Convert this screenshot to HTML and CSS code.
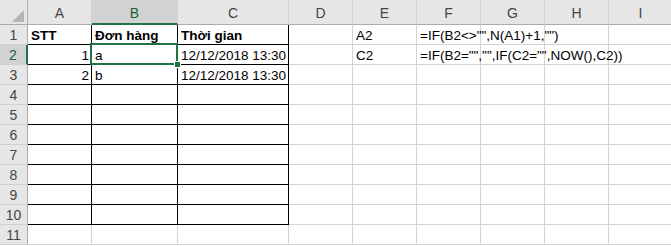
FILE: index.html
```html
<!DOCTYPE html>
<html lang="vi">
<head>
    <meta charset="UTF-8">
    <meta name="viewport" content="width=device-width, initial-scale=1.0">
    <title>Sheet1</title>
    <link rel="stylesheet" href="styles.css">
</head>
<body>
    <div class="sheet">
        <!-- header row -->
        <div class="corner"><span class="corner-tri"></span></div>
        <div class="hd">A</div>
        <div class="hd sel-col">B</div>
        <div class="hd">C</div>
        <div class="hd">D</div>
        <div class="hd">E</div>
        <div class="hd">F</div>
        <div class="hd">G</div>
        <div class="hd">H</div>
        <div class="hd">I</div>

        <!-- row 1 -->
        <div class="rh">1</div>
        <div class="c b bold">STT</div>
        <div class="c b bold">Đơn hàng</div>
        <div class="c b bold">Thời gian</div>
        <div class="c"></div>
        <div class="c">A2</div>
        <div class="c over">=IF(B2&lt;&gt;"",N(A1)+1,"")</div>
        <div class="c"></div>
        <div class="c"></div>
        <div class="c"></div>

        <!-- row 2 -->
        <div class="rh sel-row">2</div>
        <div class="c b num">1</div>
        <div class="c b">a</div>
        <div class="c b num">12/12/2018 13:30</div>
        <div class="c"></div>
        <div class="c">C2</div>
        <div class="c over">=IF(B2="","",IF(C2="",NOW(),C2))</div>
        <div class="c"></div>
        <div class="c"></div>
        <div class="c"></div>

        <!-- row 3 -->
        <div class="rh">3</div>
        <div class="c b num">2</div>
        <div class="c b">b</div>
        <div class="c b num">12/12/2018 13:30</div>
        <div class="c"></div><div class="c"></div><div class="c"></div><div class="c"></div><div class="c"></div><div class="c"></div>

        <div class="rh">4</div>
        <div class="c b"></div><div class="c b"></div><div class="c b"></div>
        <div class="c"></div><div class="c"></div><div class="c"></div><div class="c"></div><div class="c"></div><div class="c"></div>

        <div class="rh">5</div>
        <div class="c b"></div><div class="c b"></div><div class="c b"></div>
        <div class="c"></div><div class="c"></div><div class="c"></div><div class="c"></div><div class="c"></div><div class="c"></div>

        <div class="rh">6</div>
        <div class="c b"></div><div class="c b"></div><div class="c b"></div>
        <div class="c"></div><div class="c"></div><div class="c"></div><div class="c"></div><div class="c"></div><div class="c"></div>

        <div class="rh">7</div>
        <div class="c b"></div><div class="c b"></div><div class="c b"></div>
        <div class="c"></div><div class="c"></div><div class="c"></div><div class="c"></div><div class="c"></div><div class="c"></div>

        <div class="rh">8</div>
        <div class="c b"></div><div class="c b"></div><div class="c b"></div>
        <div class="c"></div><div class="c"></div><div class="c"></div><div class="c"></div><div class="c"></div><div class="c"></div>

        <div class="rh">9</div>
        <div class="c b"></div><div class="c b"></div><div class="c b"></div>
        <div class="c"></div><div class="c"></div><div class="c"></div><div class="c"></div><div class="c"></div><div class="c"></div>

        <div class="rh">10</div>
        <div class="c b"></div><div class="c b"></div><div class="c b"></div>
        <div class="c"></div><div class="c"></div><div class="c"></div><div class="c"></div><div class="c"></div><div class="c"></div>

        <div class="rh">11</div>
        <div class="c"></div><div class="c"></div><div class="c"></div>
        <div class="c"></div><div class="c"></div><div class="c"></div><div class="c"></div><div class="c"></div><div class="c"></div>

        <!-- active cell B2 -->
        <div class="selection"><span class="handle"></span></div>
    </div>
</body>
</html>
```

FILE: styles.css
```css
body {
    margin: 0;
    padding: 0;
    background-color: #ffffff;
    font-family: "Liberation Sans", Arial, sans-serif;
    overflow: hidden;
}

.sheet {
    position: relative;
    display: grid;
    grid-template-columns: 28px 64px 86px 111px 64px 64px 64px 64px 64px 64px;
    grid-template-rows: 25px repeat(11, 20px);
    width: 671px;
}

.sheet > div {
    box-sizing: border-box;
}

.corner {
    background-color: #e6e6e6;
    border-right: 1px solid #ababab;
    border-bottom: 1px solid #ababab;
    position: relative;
}

.corner-tri {
    position: absolute;
    left: 12px;
    top: 10px;
    width: 0;
    height: 0;
    border-left: 12px solid transparent;
    border-bottom: 12px solid #b4b4b4;
}

.hd {
    background-color: #e6e6e6;
    border-right: 1px solid #d0d0d0;
    border-bottom: 1px solid #ababab;
    color: #444444;
    font-size: 14px;
    text-align: center;
    line-height: 26px;
}

.hd.sel-col {
    background-color: #d2d2d2;
    border-bottom: 2px solid #217346;
    color: #1e5e3a;
}

.rh {
    background-color: #e6e6e6;
    border-right: 1px solid #ababab;
    border-bottom: 1px solid #d0d0d0;
    color: #444444;
    font-size: 14px;
    text-align: center;
    line-height: 20px;
}

.rh.sel-row {
    background-color: #d2d2d2;
    border-right: 2px solid #217346;
    color: #1e5e3a;
}

.c {
    border-right: 1px solid #d4d4d4;
    border-bottom: 1px solid #d4d4d4;
    font-size: 13.5px;
    line-height: 21px;
    padding: 0 3px;
    color: #000000;
    white-space: nowrap;
}

.c.b {
    border-right-color: #000000;
    border-bottom-color: #000000;
}

.c.bold {
    font-weight: bold;
}

.c.num {
    text-align: right;
    padding-right: 2px;
}

.c.over {
    overflow: visible;
    position: relative;
    z-index: 1;
}

.selection {
    position: absolute;
    left: 90px;
    top: 43px;
    width: 88px;
    height: 22px;
    border: 2px solid #217346;
    box-sizing: border-box;
}

.handle {
    position: absolute;
    right: -5px;
    bottom: -5px;
    width: 5px;
    height: 5px;
    background-color: #217346;
    border: 1px solid #ffffff;
}
```
